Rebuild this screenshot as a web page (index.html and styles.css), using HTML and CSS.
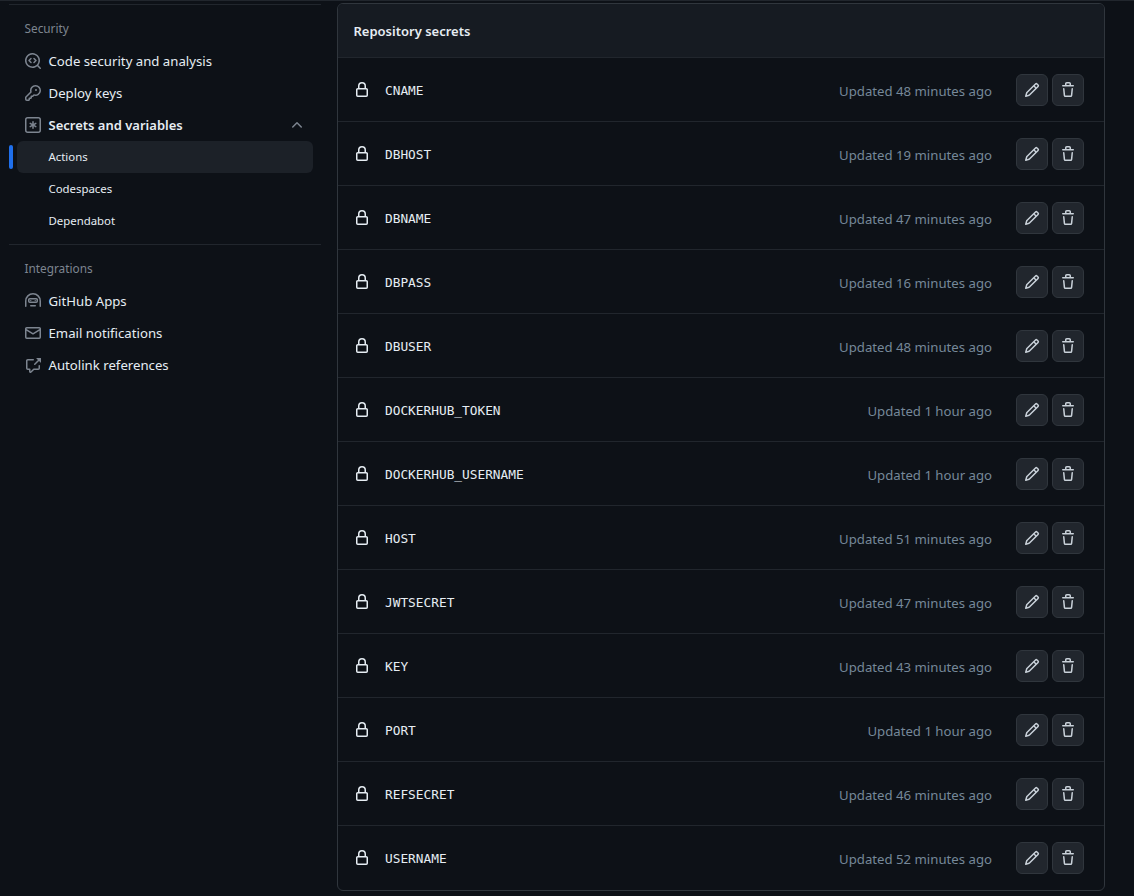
FILE: index.html
```html
<!DOCTYPE html>
<html lang="en">

<head>
	<title>Secrets</title>
	<meta charset="utf-8">
	<link rel="stylesheet" href="styles.css">
</head>

<body>
	<svg class="defs" aria-hidden="true">
		<symbol id="lock" viewBox="0 0 16 16"><path d="M4 4a4 4 0 0 1 8 0v2h.25c.966 0 1.75.784 1.75 1.75v5.5A1.75 1.75 0 0 1 12.25 15h-8.5A1.75 1.75 0 0 1 2 13.25v-5.5C2 6.784 2.784 6 3.75 6H4Zm8.25 3.5h-8.5a.25.25 0 0 0-.25.25v5.5c0 .138.112.25.25.25h8.5a.25.25 0 0 0 .25-.25v-5.5a.25.25 0 0 0-.25-.25ZM10.5 6V4a2.5 2.5 0 1 0-5 0v2Z"/></symbol>
		<symbol id="pencil" viewBox="0 0 16 16"><path d="M11.013 1.427a1.75 1.75 0 0 1 2.474 0l1.086 1.086a1.75 1.75 0 0 1 0 2.474l-8.61 8.61c-.21.21-.47.364-.756.445l-3.251.93a.75.75 0 0 1-.927-.928l.929-3.25c.081-.286.235-.547.445-.758l8.61-8.61Zm.176 4.823L9.75 4.81l-6.286 6.287a.253.253 0 0 0-.064.108l-.558 1.953 1.953-.558a.253.253 0 0 0 .108-.064Zm1.238-3.763a.25.25 0 0 0-.354 0L10.811 3.75l1.439 1.44 1.263-1.263a.25.25 0 0 0 0-.354Z"/></symbol>
		<symbol id="trash" viewBox="0 0 16 16"><path d="M11 1.75V3h2.25a.75.75 0 0 1 0 1.5H2.75a.75.75 0 0 1 0-1.5H5V1.75C5 .784 5.784 0 6.75 0h2.5C10.216 0 11 .784 11 1.75ZM4.496 6.675l.66 6.6a.25.25 0 0 0 .249.225h5.19a.25.25 0 0 0 .249-.225l.66-6.6a.75.75 0 0 1 1.492.149l-.66 6.6A1.748 1.748 0 0 1 10.595 15h-5.19a1.75 1.75 0 0 1-1.741-1.575l-.66-6.6a.75.75 0 1 1 1.492-.15ZM6.5 1.75V3h3V1.75a.25.25 0 0 0-.25-.25h-2.5a.25.25 0 0 0-.25.25Z"/></symbol>
	</svg>

	<div class="page">
		<nav class="sidebar">
			<hr class="divider">
			<h3 class="nav-heading">Security</h3>
			<a class="nav-item">
				<svg class="nav-icon" viewBox="0 0 16 16"><path d="M8.47 4.97a.75.75 0 0 0 0 1.06L9.94 7.5 8.47 8.97a.75.75 0 1 0 1.06 1.06l2-2a.75.75 0 0 0 0-1.06l-2-2a.75.75 0 0 0-1.06 0ZM6.53 6.03a.75.75 0 0 0-1.06-1.06l-2 2a.75.75 0 0 0 0 1.06l2 2a.75.75 0 1 0 1.06-1.06L5.06 7.5l1.47-1.47Z"/><path d="M12.246 13.307a7.501 7.501 0 1 1 1.06-1.06l2.474 2.473a.749.749 0 0 1-.326 1.275.749.749 0 0 1-.734-.215ZM1.5 7.5a6 6 0 1 0 12 0 6 6 0 0 0-12 0Z"/></svg>
				Code security and analysis
			</a>
			<a class="nav-item">
				<svg class="nav-icon" viewBox="0 0 16 16"><path d="M10.5 0a5.499 5.499 0 1 1-1.288 10.848l-.932.932a.749.749 0 0 1-.53.22H7v.75a.749.749 0 0 1-.22.53l-.5.5a.749.749 0 0 1-.53.22H5v.75a.749.749 0 0 1-.22.53l-.5.5a.749.749 0 0 1-.53.22h-2A1.75 1.75 0 0 1 0 14.25v-2c0-.199.079-.389.22-.53l4.932-4.932A5.5 5.5 0 0 1 10.5 0Zm-4 5.5c-.001.431.069.86.205 1.269a.75.75 0 0 1-.181.768L1.5 12.56v1.69c0 .138.112.25.25.25h1.69l.06-.06v-1.19a.75.75 0 0 1 .75-.75h1.19l.06-.06v-1.19a.75.75 0 0 1 .75-.75h1.19l1.023-1.025a.75.75 0 0 1 .768-.18A4 4 0 1 0 6.5 5.5ZM11 6a1 1 0 1 1 0-2 1 1 0 0 1 0 2Z"/></svg>
				Deploy keys
			</a>
			<a class="nav-item nav-open">
				<svg class="nav-icon" viewBox="0 0 16 16"><path d="M0 2.75A2.75 2.75 0 0 1 2.75 0h10.5A2.75 2.75 0 0 1 16 2.75v10.5A2.75 2.75 0 0 1 13.25 16H2.75A2.75 2.75 0 0 1 0 13.25ZM2.75 1.5c-.69 0-1.25.56-1.25 1.25v10.5c0 .69.56 1.25 1.25 1.25h10.5c.69 0 1.25-.56 1.25-1.25V2.75c0-.69-.56-1.25-1.25-1.25Z"/><path d="M8 4a.75.75 0 0 1 .75.75V6.7l1.69-.975a.75.75 0 0 1 .75 1.3L9.5 8l1.69.976a.75.75 0 0 1-.75 1.298L8.75 9.3v1.951a.75.75 0 0 1-1.5 0V9.299l-1.69.975a.75.75 0 0 1-.75-1.298L6.5 8l-1.69-.975a.75.75 0 0 1 .75-1.3l1.69.976V4.75A.75.75 0 0 1 8 4Z"/></svg>
				Secrets and variables
				<svg class="nav-icon chevron" viewBox="0 0 16 16"><path d="M3.22 10.53a.749.749 0 0 1 0-1.06l4.25-4.25a.749.749 0 0 1 1.06 0l4.25 4.25a.749.749 0 0 1-1.06 1.06L8 6.811 4.28 10.53a.749.749 0 0 1-1.06 0Z"/></svg>
			</a>
			<a class="nav-item nav-sub nav-current">Actions</a>
			<a class="nav-item nav-sub">Codespaces</a>
			<a class="nav-item nav-sub">Dependabot</a>
			<hr class="divider divider-lower">
			<h3 class="nav-heading">Integrations</h3>
			<a class="nav-item">
				<svg class="nav-icon" viewBox="0 0 16 16"><path d="M0 8a8 8 0 0 1 16 0v5.25a.75.75 0 0 1-1.5 0V8a6.5 6.5 0 1 0-13 0v5.25a.75.75 0 0 1-1.5 0Z"/><path d="M3 6.75C3 5.784 3.784 5 4.75 5h6.5c.966 0 1.75.784 1.75 1.75v1.5A1.75 1.75 0 0 1 11.25 10h-6.5A1.75 1.75 0 0 1 3 8.25Zm1.75-.25a.25.25 0 0 0-.25.25v1.5c0 .138.112.25.25.25h6.5a.25.25 0 0 0 .25-.25v-1.5a.25.25 0 0 0-.25-.25Z"/><path d="M5.75 6.9a.75.75 0 0 1 .75.6.75.75 0 0 1-1.5 0 .75.75 0 0 1 .75-.6Zm4.5 0a.75.75 0 0 1 .75.6.75.75 0 0 1-1.5 0 .75.75 0 0 1 .75-.6ZM5.75 12h4.5a.75.75 0 0 1 0 1.5h-4.5a.75.75 0 0 1 0-1.5Z"/></svg>
				GitHub Apps
			</a>
			<a class="nav-item">
				<svg class="nav-icon" viewBox="0 0 16 16"><path d="M1.75 2h12.5c.966 0 1.75.784 1.75 1.75v8.5A1.75 1.75 0 0 1 14.25 14H1.75A1.75 1.75 0 0 1 0 12.25v-8.5C0 2.784.784 2 1.75 2ZM1.5 12.251c0 .138.112.25.25.25h12.5a.25.25 0 0 0 .25-.25V5.809L8.38 9.397a.75.75 0 0 1-.76 0L1.5 5.809v6.442Zm13-8.181v-.32a.25.25 0 0 0-.25-.25H1.75a.25.25 0 0 0-.25.25v.32L8 7.88Z"/></svg>
				Email notifications
			</a>
			<a class="nav-item">
				<svg class="nav-icon" viewBox="0 0 16 16"><path d="M2.75 3.5a.25.25 0 0 0-.25.25v7.5c0 .138.112.25.25.25h2a.75.75 0 0 1 .75.75v2.19l2.72-2.72a.749.749 0 0 1 .53-.22h4.5a.25.25 0 0 0 .25-.25v-2.5a.75.75 0 0 1 1.5 0v2.5A1.75 1.75 0 0 1 13.25 13H9.06l-2.573 2.573A1.458 1.458 0 0 1 4 14.543V13H2.75A1.75 1.75 0 0 1 1 11.25v-7.5C1 2.784 1.784 2 2.75 2h5.5a.75.75 0 0 1 0 1.5ZM16 1.25v4.146a.25.25 0 0 1-.427.177L14.03 4.03l-3.75 3.75a.749.749 0 0 1-1.06-.007.749.749 0 0 1-.007-1.06l3.75-3.75-1.543-1.543A.25.25 0 0 1 11.604 1h4.146a.25.25 0 0 1 .25.25Z"/></svg>
				Autolink references
			</a>
		</nav>

		<main class="secrets">
			<div class="secrets-head">Repository secrets</div>

			<div class="secret">
				<svg class="lock"><use href="#lock"/></svg>
				<code class="secret-name">CNAME</code>
				<span class="secret-time">Updated 48 minutes ago</span>
				<button class="icon-btn"><svg><use href="#pencil"/></svg></button>
				<button class="icon-btn"><svg><use href="#trash"/></svg></button>
			</div>
			<div class="secret">
				<svg class="lock"><use href="#lock"/></svg>
				<code class="secret-name">DBHOST</code>
				<span class="secret-time">Updated 19 minutes ago</span>
				<button class="icon-btn"><svg><use href="#pencil"/></svg></button>
				<button class="icon-btn"><svg><use href="#trash"/></svg></button>
			</div>
			<div class="secret">
				<svg class="lock"><use href="#lock"/></svg>
				<code class="secret-name">DBNAME</code>
				<span class="secret-time">Updated 47 minutes ago</span>
				<button class="icon-btn"><svg><use href="#pencil"/></svg></button>
				<button class="icon-btn"><svg><use href="#trash"/></svg></button>
			</div>
			<div class="secret">
				<svg class="lock"><use href="#lock"/></svg>
				<code class="secret-name">DBPASS</code>
				<span class="secret-time">Updated 16 minutes ago</span>
				<button class="icon-btn"><svg><use href="#pencil"/></svg></button>
				<button class="icon-btn"><svg><use href="#trash"/></svg></button>
			</div>
			<div class="secret">
				<svg class="lock"><use href="#lock"/></svg>
				<code class="secret-name">DBUSER</code>
				<span class="secret-time">Updated 48 minutes ago</span>
				<button class="icon-btn"><svg><use href="#pencil"/></svg></button>
				<button class="icon-btn"><svg><use href="#trash"/></svg></button>
			</div>
			<div class="secret">
				<svg class="lock"><use href="#lock"/></svg>
				<code class="secret-name">DOCKERHUB_TOKEN</code>
				<span class="secret-time">Updated 1 hour ago</span>
				<button class="icon-btn"><svg><use href="#pencil"/></svg></button>
				<button class="icon-btn"><svg><use href="#trash"/></svg></button>
			</div>
			<div class="secret">
				<svg class="lock"><use href="#lock"/></svg>
				<code class="secret-name">DOCKERHUB_USERNAME</code>
				<span class="secret-time">Updated 1 hour ago</span>
				<button class="icon-btn"><svg><use href="#pencil"/></svg></button>
				<button class="icon-btn"><svg><use href="#trash"/></svg></button>
			</div>
			<div class="secret">
				<svg class="lock"><use href="#lock"/></svg>
				<code class="secret-name">HOST</code>
				<span class="secret-time">Updated 51 minutes ago</span>
				<button class="icon-btn"><svg><use href="#pencil"/></svg></button>
				<button class="icon-btn"><svg><use href="#trash"/></svg></button>
			</div>
			<div class="secret">
				<svg class="lock"><use href="#lock"/></svg>
				<code class="secret-name">JWTSECRET</code>
				<span class="secret-time">Updated 47 minutes ago</span>
				<button class="icon-btn"><svg><use href="#pencil"/></svg></button>
				<button class="icon-btn"><svg><use href="#trash"/></svg></button>
			</div>
			<div class="secret">
				<svg class="lock"><use href="#lock"/></svg>
				<code class="secret-name">KEY</code>
				<span class="secret-time">Updated 43 minutes ago</span>
				<button class="icon-btn"><svg><use href="#pencil"/></svg></button>
				<button class="icon-btn"><svg><use href="#trash"/></svg></button>
			</div>
			<div class="secret">
				<svg class="lock"><use href="#lock"/></svg>
				<code class="secret-name">PORT</code>
				<span class="secret-time">Updated 1 hour ago</span>
				<button class="icon-btn"><svg><use href="#pencil"/></svg></button>
				<button class="icon-btn"><svg><use href="#trash"/></svg></button>
			</div>
			<div class="secret">
				<svg class="lock"><use href="#lock"/></svg>
				<code class="secret-name">REFSECRET</code>
				<span class="secret-time">Updated 46 minutes ago</span>
				<button class="icon-btn"><svg><use href="#pencil"/></svg></button>
				<button class="icon-btn"><svg><use href="#trash"/></svg></button>
			</div>
			<div class="secret">
				<svg class="lock"><use href="#lock"/></svg>
				<code class="secret-name">USERNAME</code>
				<span class="secret-time">Updated 52 minutes ago</span>
				<button class="icon-btn"><svg><use href="#pencil"/></svg></button>
				<button class="icon-btn"><svg><use href="#trash"/></svg></button>
			</div>
		</main>
	</div>
</body>

</html>
```

FILE: styles.css
```css
html, body {
	margin: 0;
	height: 100%;
	overflow: hidden;
}

body {
	background: #0d1117;
	color: #e6edf3;
	font-family: "Noto Sans", "Liberation Sans", sans-serif;
	font-size: 13.2px;
}

.defs {
	display: none;
}

.page {
	display: flex;
	align-items: flex-start;
	border-top: 1px solid #21262d;
	padding: 2px 29px 0 9px;
}

.sidebar {
	width: 312px;
	margin-right: 16px;
	flex: none;
}

.divider {
	height: 1px;
	margin: 1px 0 0;
	border: 0;
	background: #21262d;
}

.divider-lower {
	margin-top: 7px;
}

.nav-heading {
	margin: 0;
	padding: 15px 0 8px 15.5px;
	height: 17px;
	line-height: 17px;
	font-size: 11.8px;
	font-weight: 400;
	color: #7d8590;
}

.nav-item {
	position: relative;
	display: flex;
	align-items: center;
	gap: 7.5px;
	height: 32px;
	margin: 0 8px;
	padding: 0 8px;
	border-radius: 6px;
}

.nav-icon {
	flex: none;
	width: 16px;
	height: 16px;
	fill: #7d8590;
}

.nav-open {
	font-size: 13px;
	font-weight: 600;
}

.chevron {
	margin-left: auto;
}

.nav-sub {
	padding: 0 8px 2px 31.5px;
	box-sizing: border-box;
	font-size: 11.4px;
}

.nav-current {
	background: #1c2128;
}

.nav-current::before {
	content: "";
	position: absolute;
	left: -8px;
	top: 4px;
	width: 4px;
	height: 24px;
	border-radius: 6px;
	background: #1f6feb;
}

.secrets {
	flex: 1;
	border: 1px solid #30363d;
	border-radius: 6px;
	overflow: hidden;
}

.secrets-head {
	display: flex;
	align-items: center;
	height: 53px;
	padding-left: 15.5px;
	background: #161b22;
	font-size: 13px;
	font-weight: 600;
}

.secret {
	display: flex;
	align-items: center;
	gap: 4px;
	height: 62px;
	padding: 1px 20px 0 16px;
	border-top: 1px solid #21262d;
}

.secret:last-child {
	padding-bottom: 1px;
}

.lock {
	flex: none;
	width: 16px;
	height: 16px;
	margin-right: 11px;
	fill: #e6edf3;
}

.secret-name {
	flex: 1;
	font-family: "DejaVu Sans Mono", monospace;
	font-size: 12.8px;
}

.secret-time {
	margin-right: 20px;
	padding-top: 2px;
	color: #768899;
}

.icon-btn {
	display: flex;
	align-items: center;
	justify-content: center;
	width: 32px;
	height: 32px;
	padding: 0;
	border: 1px solid #30363d;
	border-radius: 6px;
	background: #21262d;
}

.icon-btn svg {
	width: 16px;
	height: 16px;
	fill: #c9d1d9;
}
```
